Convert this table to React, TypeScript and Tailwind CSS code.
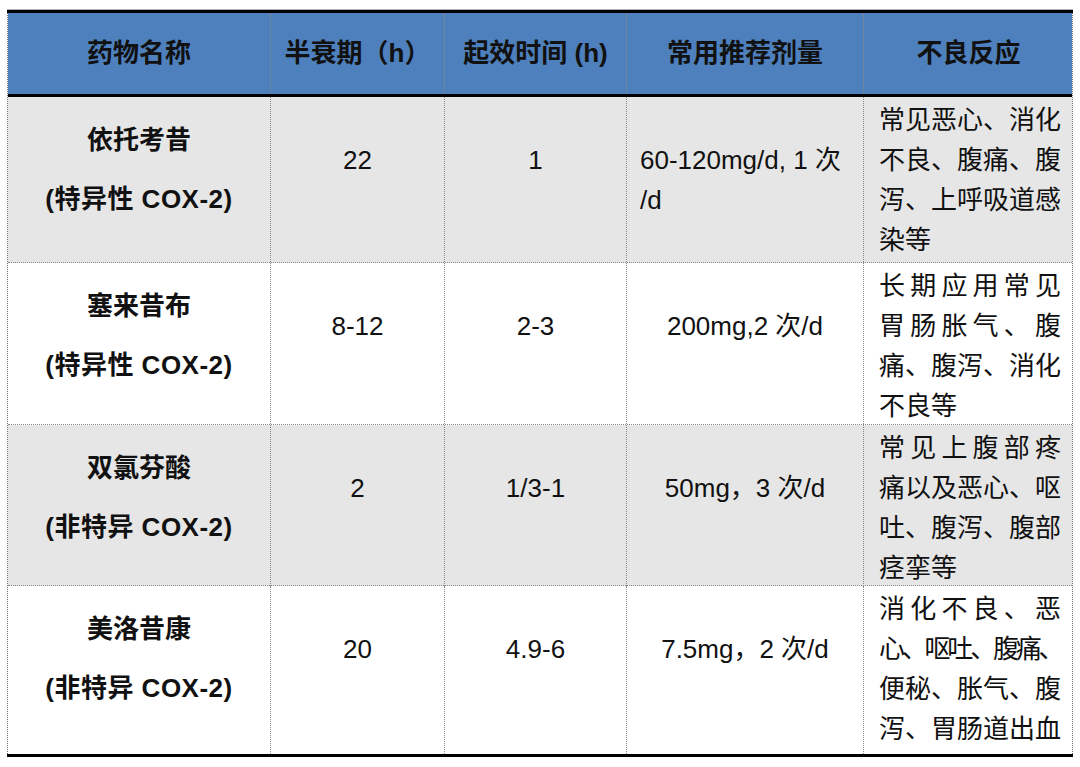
import React from "react";

type Row = {
  name: string;
  sub: string;
  half: string;
  onset: string;
  dose: string[];
  doseLeft: boolean;
  adverse: string[];
  tight?: number;
  gray: boolean;
  h: string;
};

const rows: Row[] = [
  {
    name: "依托考昔",
    sub: "(特异性 COX-2)",
    half: "22",
    onset: "1",
    dose: ["60-120mg/d, 1 次", "/d"],
    doseLeft: true,
    adverse: ["常见恶心、消化", "不良、腹痛、腹", "泻、上呼吸道感", "染等"],
    gray: true,
    h: "h-[166px]",
  },
  {
    name: "塞来昔布",
    sub: "(特异性 COX-2)",
    half: "8-12",
    onset: "2-3",
    dose: ["200mg,2 次/d"],
    doseLeft: false,
    adverse: ["长期应用常见", "胃肠胀气、腹", "痛、腹泻、消化", "不良等"],
    gray: false,
    h: "h-[162px]",
  },
  {
    name: "双氯芬酸",
    sub: "(非特异 COX-2)",
    half: "2",
    onset: "1/3-1",
    dose: ["50mg，3 次/d"],
    doseLeft: false,
    adverse: ["常见上腹部疼", "痛以及恶心、呕", "吐、腹泻、腹部", "痉挛等"],
    gray: true,
    h: "h-[161px]",
  },
  {
    name: "美洛昔康",
    sub: "(非特异 COX-2)",
    half: "20",
    onset: "4.9-6",
    dose: ["7.5mg，2 次/d"],
    doseLeft: false,
    adverse: ["消化不良、恶", "心、呕吐、腹痛、", "便秘、胀气、腹", "泻、胃肠道出血"],
    tight: 1,
    gray: false,
    h: "h-[168px]",
  },
];

const headers = ["药物名称", "半衰期（h）", "起效时间 (h)", "常用推荐剂量", "不良反应"];

const cols = "grid grid-cols-[263px_174px_182px_237px_209px]";
const divider = "border-r border-dotted border-[#8a8a8a]";

export default function App() {
  return (
    <div className="w-[1080px] h-[767px] bg-white pt-[9px] pl-[7px] font-['Liberation_Sans','Noto_Sans_CJK_SC',sans-serif] text-[26px] text-[#111]">
      <div className="w-[1066px] border-t border-[#b0b0b0]">
        <div className="border-t-[3px] border-b-[3px] border-black">
          <div className="border-l border-r border-dotted border-[#6b6b6b]">
            {/* header */}
            <div className={`${cols} h-[84px] bg-[#4e80bd] border-b-[3px] border-solid border-black font-bold`}>
              {headers.map((t, i) => (
                <div
                  key={t}
                  className={`flex items-center justify-center ${i < headers.length - 1 ? divider : ""}`}
                >
                  {t}
                </div>
              ))}
            </div>
            {/* rows */}
            {rows.map((r, ri) => (
              <div
                key={r.name}
                className={`${cols} ${r.h} ${r.gray ? "bg-[#e6e6e6]" : "bg-white"} ${
                  ri < rows.length - 1 ? "border-b border-dotted border-[#8a8a8a]" : ""
                }`}
              >
                <div className={`${divider} flex flex-col items-center pt-[23px] gap-[19px] leading-[40px] font-bold`}>
                  <div>{r.name}</div>
                  <div className="tracking-[0.5px]">{r.sub}</div>
                </div>
                <div className={`${divider} text-center pt-[43px] leading-[40px]`}>{r.half}</div>
                <div className={`${divider} text-center pt-[43px] leading-[40px]`}>{r.onset}</div>
                <div
                  className={`${divider} pt-[43px] leading-[40px] ${
                    r.doseLeft ? "pl-[13px] text-left" : "text-center"
                  }`}
                >
                  {r.dose.map((d) => (
                    <div key={d}>{d}</div>
                  ))}
                </div>
                <div className="pl-[15px] pr-[12px] pt-[3px] leading-[40px]">
                  {r.adverse.map((a, ai) => (
                    <div
                      key={a}
                      className={`${ai < r.adverse.length - 1 ? "[text-align-last:justify] text-justify" : "text-left"} ${
                        r.tight === ai ? "tracking-[-3.5px]" : ""
                      } whitespace-nowrap`}
                    >
                      {a}
                    </div>
                  ))}
                </div>
              </div>
            ))}
          </div>
        </div>
      </div>
    </div>
  );
}
